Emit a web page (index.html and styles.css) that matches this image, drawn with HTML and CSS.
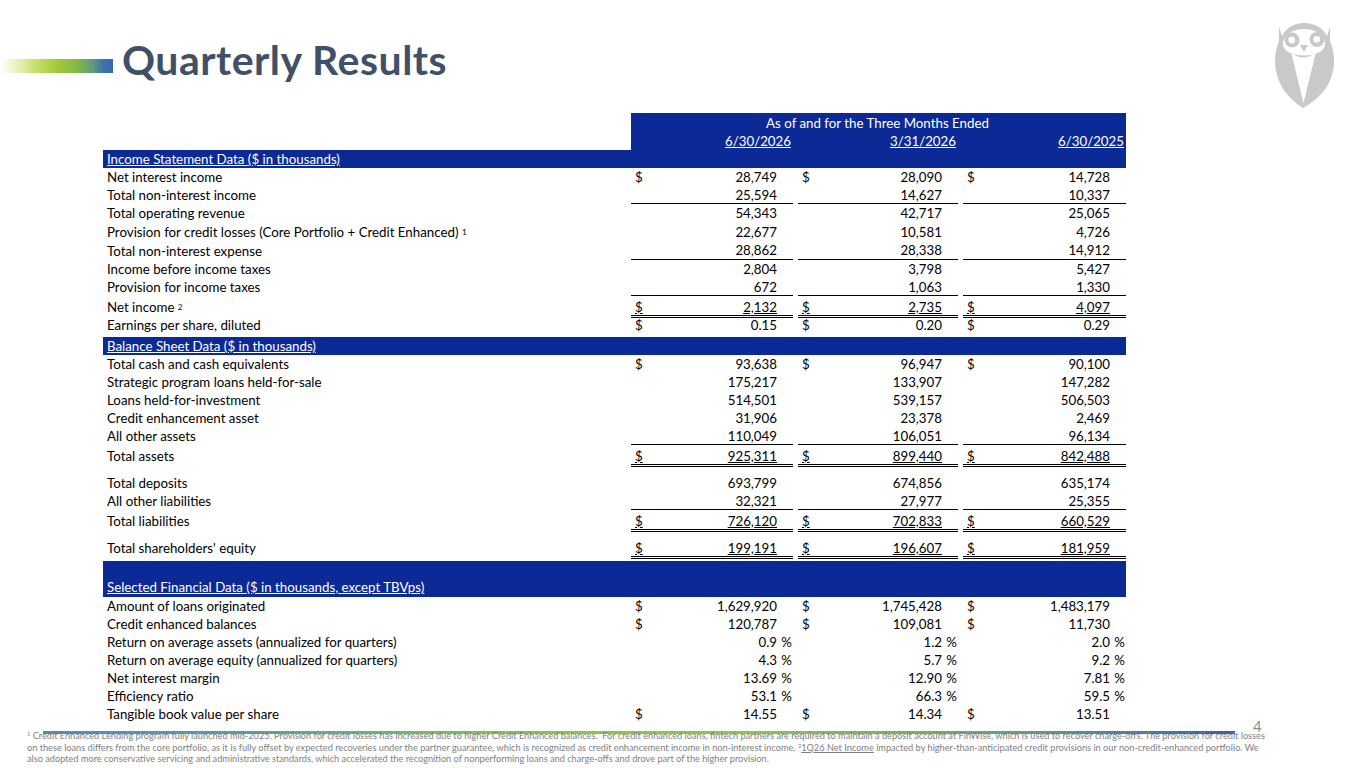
FILE: index.html
```html
<!DOCTYPE html>
<html lang="en">
<head>
<meta charset="utf-8">
<title>Quarterly Results</title>
<link rel="stylesheet" href="styles.css">
</head>
<body>
<div class="slide">
  <header class="top">
    <div class="brand">
      <div class="accent"></div>
      <h1>Quarterly Results</h1>
    </div>
    <svg class="owl" viewBox="0 0 64 90" width="64" height="90" aria-hidden="true">
      <path fill="#c9c9c9" d="M31,2 C42,2 50,7 54,15 L57,6 L57,20 C61,30 62,40 60,50 C57,66 45,79 30,87 C17,79 6,66 3,50 C1,40 2,30 6,20 L6,6 L9,15 C13,7 21,2 31,2 Z"/>
      <path fill="#fff" d="M31,8 C42,8 50,13 52,21 C53,28 47,32 41,33 Q31,36 21,33 C15,32 9,28 10,21 C12,13 20,8 31,8 Z"/>
      <path fill="#fff" d="M18,31 Q30,42 43,31 L30.5,82 Z"/>
      <circle cx="19" cy="19" r="7.5" fill="#c9c9c9"/>
      <circle cx="44" cy="18.5" r="7.5" fill="#c9c9c9"/>
      <circle cx="18.7" cy="19" r="3.4" fill="#fff"/>
      <circle cx="43.7" cy="18.3" r="3.4" fill="#fff"/>
      <path fill="#c9c9c9" d="M27,24 L35,24 L31,31 Z"/>
    </svg>
  </header>

  <section class="fin">
    <div class="row h19">
      <div class="lbl"></div>
      <div class="band span">As of and for the Three Months Ended</div>
    </div>
    <div class="row">
      <div class="lbl"></div>
      <div class="band full"></div>
      <div class="dt c1"><u>6/30/2026</u></div>
      <div class="dt c2"><u>3/31/2026</u></div>
      <div class="dt c3"><u>6/30/2025</u></div>
    </div>
    <div class="row sect"><div class="lbl"><u>Income Statement Data ($ in thousands)</u></div></div>

    <div class="row">
      <div class="lbl">Net interest income</div>
      <div class="g c1"><span class="d">$</span><span class="v">28,749</span><span class="p"></span></div>
      <div class="g c2"><span class="d">$</span><span class="v">28,090</span><span class="p"></span></div>
      <div class="g c3"><span class="d">$</span><span class="v">14,728</span><span class="p"></span></div>
    </div>
    <div class="row">
      <div class="lbl">Total non-interest income</div>
      <div class="g c1 s"><span class="v">25,594</span><span class="p"></span></div>
      <div class="g c2 s"><span class="v">14,627</span><span class="p"></span></div>
      <div class="g c3 s"><span class="v">10,337</span><span class="p"></span></div>
    </div>
    <div class="row">
      <div class="lbl">Total operating revenue</div>
      <div class="g c1"><span class="v">54,343</span><span class="p"></span></div>
      <div class="g c2"><span class="v">42,717</span><span class="p"></span></div>
      <div class="g c3"><span class="v">25,065</span><span class="p"></span></div>
    </div>
    <div class="row h19">
      <div class="lbl">Provision for credit losses (Core Portfolio + Credit Enhanced) <sup>1</sup></div>
      <div class="g c1"><span class="v">22,677</span><span class="p"></span></div>
      <div class="g c2"><span class="v">10,581</span><span class="p"></span></div>
      <div class="g c3"><span class="v">4,726</span><span class="p"></span></div>
    </div>
    <div class="row h19">
      <div class="lbl">Total non-interest expense</div>
      <div class="g c1 s"><span class="v">28,862</span><span class="p"></span></div>
      <div class="g c2 s"><span class="v">28,338</span><span class="p"></span></div>
      <div class="g c3 s"><span class="v">14,912</span><span class="p"></span></div>
    </div>
    <div class="row">
      <div class="lbl">Income before income taxes</div>
      <div class="g c1"><span class="v">2,804</span><span class="p"></span></div>
      <div class="g c2"><span class="v">3,798</span><span class="p"></span></div>
      <div class="g c3"><span class="v">5,427</span><span class="p"></span></div>
    </div>
    <div class="row">
      <div class="lbl">Provision for income taxes</div>
      <div class="g c1 s"><span class="v">672</span><span class="p"></span></div>
      <div class="g c2 s"><span class="v">1,063</span><span class="p"></span></div>
      <div class="g c3 s"><span class="v">1,330</span><span class="p"></span></div>
    </div>
    <div class="row h20">
      <div class="lbl">Net income&nbsp;<sup>2</sup></div>
      <div class="g c1 dbl"><span class="d"><u>$</u></span><span class="v"><u>2,132</u></span><span class="p"></span></div>
      <div class="g c2 dbl"><span class="d"><u>$</u></span><span class="v"><u>2,735</u></span><span class="p"></span></div>
      <div class="g c3 dbl"><span class="d"><u>$</u></span><span class="v"><u>4,097</u></span><span class="p"></span></div>
    </div>
    <div class="row">
      <div class="lbl">Earnings per share, diluted</div>
      <div class="g c1"><span class="d">$</span><span class="v">0.15</span><span class="p"></span></div>
      <div class="g c2"><span class="d">$</span><span class="v">0.20</span><span class="p"></span></div>
      <div class="g c3"><span class="d">$</span><span class="v">0.29</span><span class="p"></span></div>
    </div>

    <div class="row sect gap3"><div class="lbl"><u>Balance Sheet Data ($ in thousands)</u></div></div>

    <div class="row">
      <div class="lbl">Total cash and cash equivalents</div>
      <div class="g c1"><span class="d">$</span><span class="v">93,638</span><span class="p"></span></div>
      <div class="g c2"><span class="d">$</span><span class="v">96,947</span><span class="p"></span></div>
      <div class="g c3"><span class="d">$</span><span class="v">90,100</span><span class="p"></span></div>
    </div>
    <div class="row">
      <div class="lbl">Strategic program loans held-for-sale</div>
      <div class="g c1"><span class="v">175,217</span><span class="p"></span></div>
      <div class="g c2"><span class="v">133,907</span><span class="p"></span></div>
      <div class="g c3"><span class="v">147,282</span><span class="p"></span></div>
    </div>
    <div class="row">
      <div class="lbl">Loans held-for-investment</div>
      <div class="g c1"><span class="v">514,501</span><span class="p"></span></div>
      <div class="g c2"><span class="v">539,157</span><span class="p"></span></div>
      <div class="g c3"><span class="v">506,503</span><span class="p"></span></div>
    </div>
    <div class="row">
      <div class="lbl">Credit enhancement asset</div>
      <div class="g c1"><span class="v">31,906</span><span class="p"></span></div>
      <div class="g c2"><span class="v">23,378</span><span class="p"></span></div>
      <div class="g c3"><span class="v">2,469</span><span class="p"></span></div>
    </div>
    <div class="row">
      <div class="lbl">All other assets</div>
      <div class="g c1 s"><span class="v">110,049</span><span class="p"></span></div>
      <div class="g c2 s"><span class="v">106,051</span><span class="p"></span></div>
      <div class="g c3 s"><span class="v">96,134</span><span class="p"></span></div>
    </div>
    <div class="row h20">
      <div class="lbl">Total assets</div>
      <div class="g c1 dbl"><span class="d"><u>$</u></span><span class="v"><u>925,311</u></span><span class="p"></span></div>
      <div class="g c2 dbl"><span class="d"><u>$</u></span><span class="v"><u>899,440</u></span><span class="p"></span></div>
      <div class="g c3 dbl"><span class="d"><u>$</u></span><span class="v"><u>842,488</u></span><span class="p"></span></div>
    </div>

    <div class="row gap9">
      <div class="lbl">Total deposits</div>
      <div class="g c1"><span class="v">693,799</span><span class="p"></span></div>
      <div class="g c2"><span class="v">674,856</span><span class="p"></span></div>
      <div class="g c3"><span class="v">635,174</span><span class="p"></span></div>
    </div>
    <div class="row">
      <div class="lbl">All other liabilities</div>
      <div class="g c1 s"><span class="v">32,321</span><span class="p"></span></div>
      <div class="g c2 s"><span class="v">27,977</span><span class="p"></span></div>
      <div class="g c3 s"><span class="v">25,355</span><span class="p"></span></div>
    </div>
    <div class="row h20">
      <div class="lbl">Total liabilities</div>
      <div class="g c1 dbl"><span class="d"><u>$</u></span><span class="v"><u>726,120</u></span><span class="p"></span></div>
      <div class="g c2 dbl"><span class="d"><u>$</u></span><span class="v"><u>702,833</u></span><span class="p"></span></div>
      <div class="g c3 dbl"><span class="d"><u>$</u></span><span class="v"><u>660,529</u></span><span class="p"></span></div>
    </div>

    <div class="row h19 gap7">
      <div class="lbl">Total shareholders' equity</div>
      <div class="g c1 dbl"><span class="d"><u>$</u></span><span class="v"><u>199,191</u></span><span class="p"></span></div>
      <div class="g c2 dbl"><span class="d"><u>$</u></span><span class="v"><u>196,607</u></span><span class="p"></span></div>
      <div class="g c3 dbl"><span class="d"><u>$</u></span><span class="v"><u>181,959</u></span><span class="p"></span></div>
    </div>

    <div class="row sect tall gap5"><div class="lbl"><u>Selected Financial Data ($ in thousands, except TBVps)</u></div></div>

    <div class="row">
      <div class="lbl">Amount of loans originated</div>
      <div class="g c1"><span class="d">$</span><span class="v">1,629,920</span><span class="p"></span></div>
      <div class="g c2"><span class="d">$</span><span class="v">1,745,428</span><span class="p"></span></div>
      <div class="g c3"><span class="d">$</span><span class="v">1,483,179</span><span class="p"></span></div>
    </div>
    <div class="row">
      <div class="lbl">Credit enhanced balances</div>
      <div class="g c1"><span class="d">$</span><span class="v">120,787</span><span class="p"></span></div>
      <div class="g c2"><span class="d">$</span><span class="v">109,081</span><span class="p"></span></div>
      <div class="g c3"><span class="d">$</span><span class="v">11,730</span><span class="p"></span></div>
    </div>
    <div class="row">
      <div class="lbl">Return on average assets (annualized for quarters)</div>
      <div class="g c1"><span class="v">0.9</span><span class="p">%</span></div>
      <div class="g c2"><span class="v">1.2</span><span class="p">%</span></div>
      <div class="g c3"><span class="v">2.0</span><span class="p">%</span></div>
    </div>
    <div class="row">
      <div class="lbl">Return on average equity (annualized for quarters)</div>
      <div class="g c1"><span class="v">4.3</span><span class="p">%</span></div>
      <div class="g c2"><span class="v">5.7</span><span class="p">%</span></div>
      <div class="g c3"><span class="v">9.2</span><span class="p">%</span></div>
    </div>
    <div class="row">
      <div class="lbl">Net interest margin</div>
      <div class="g c1"><span class="v">13.69</span><span class="p">%</span></div>
      <div class="g c2"><span class="v">12.90</span><span class="p">%</span></div>
      <div class="g c3"><span class="v">7.81</span><span class="p">%</span></div>
    </div>
    <div class="row">
      <div class="lbl">Efficiency ratio</div>
      <div class="g c1"><span class="v">53.1</span><span class="p">%</span></div>
      <div class="g c2"><span class="v">66.3</span><span class="p">%</span></div>
      <div class="g c3"><span class="v">59.5</span><span class="p">%</span></div>
    </div>
    <div class="row">
      <div class="lbl">Tangible book value per share</div>
      <div class="g c1"><span class="d">$</span><span class="v">14.55</span><span class="p"></span></div>
      <div class="g c2"><span class="d">$</span><span class="v">14.34</span><span class="p"></span></div>
      <div class="g c3"><span class="d">$</span><span class="v">13.51</span><span class="p"></span></div>
    </div>
  </section>

  <div class="foot">
    <div class="rule"></div>
    <div class="pg">4</div>
  </div>
  <p class="notes"><sup>1</sup> Credit Enhanced Lending program fully launched mid-2025. Provision for credit losses has increased due to higher Credit Enhanced balances.&nbsp; For credit enhanced loans, fintech partners are required to maintain a deposit account at FinWise, which is used to recover charge-offs. The provision for credit losses<br>on these loans differs from the core portfolio, as it is fully offset by expected recoveries under the partner guarantee, which is recognized as credit enhancement income in non-interest income. <sup>2</sup><u>1Q26 Net Income</u> impacted by higher-than-anticipated credit provisions in our non-credit-enhanced portfolio. We<br>also adopted more conservative servicing and administrative standards, which accelerated the recognition of nonperforming loans and charge-offs and drove part of the higher provision.</p>
</div>
</body>
</html>
```

FILE: styles.css
```css
html, body {
  margin: 0;
  padding: 0;
  background: #ffffff;
}

.slide {
  width: 1365px;
  height: 768px;
  overflow: hidden;
  font-family: Lato, "Liberation Sans", sans-serif;
  color: #000;
}

/* ---------- header ---------- */
.top {
  display: flex;
  align-items: flex-start;
  height: 113px;
}

.brand {
  display: flex;
  align-items: flex-start;
  margin-top: 39px;
}

.accent {
  width: 113px;
  height: 14px;
  margin-top: 20px;
  background: linear-gradient(to right, #ffffff 0%, #eef4cf 12%, #c9de6a 32%, #a3c93b 50%, #86b843 68%, #5e9a7e 82%, #3f72b0 92%, #3a67b3 100%);
}

.top h1 {
  margin: 0 0 0 9px;
  font-family: Lato, "Liberation Sans", sans-serif;
  font-weight: 700;
  font-size: 41px;
  line-height: 41px;
  letter-spacing: 0.5px;
  color: #415069;
  white-space: nowrap;
}

.owl {
  display: block;
  margin-left: auto;
  margin-top: 21px;
  margin-right: 28px;
}

/* ---------- table ---------- */
.fin {
  margin-left: 103px;
  width: 1023px;
  font-size: 13.3px;
}

.row {
  display: grid;
  grid-template-columns: 528px 162px 5px 160px 5px 163px;
  height: 18px;
}

.row > * {
  grid-row: 1;
  box-sizing: border-box;
  min-width: 0;
}

.h19 { height: 19px; }
.h20 { height: 20px; }
.gap3 { margin-top: 3px; }
.gap5 { margin-top: 5px; }
.gap7 { margin-top: 7px; }
.gap9 { margin-top: 9px; }

.lbl {
  grid-column: 1;
  display: flex;
  align-items: center;
  padding-left: 4px;
  white-space: pre;
}

.lbl sup, .notes sup {
  font-size: 0.62em;
  line-height: 0;
  vertical-align: 0.5em;
}

.band {
  grid-column: 2 / 7;
  background: #0c2a95;
  color: #fff;
}

.band.span {
  display: flex;
  align-items: center;
  justify-content: center;
  padding-right: 2px;
}

.dt {
  color: #fff;
  display: flex;
  align-items: center;
  justify-content: flex-end;
  padding-right: 2px;
}

.c1 { grid-column: 2; }
.c2 { grid-column: 4; }
.c3 { grid-column: 6; }

.sect {
  background: #0c2a95;
  color: #fff;
}

.sect.tall {
  height: 36px;
}

.sect.tall .lbl {
  align-items: flex-end;
  padding-bottom: 2px;
}

.g {
  display: flex;
  align-items: center;
  padding-left: 4px;
  white-space: nowrap;
}

.g .d {
  flex: none;
}

.g .v {
  flex: 1;
  text-align: right;
}

.g .p {
  flex: none;
  width: 16px;
  text-align: right;
  padding-right: 1px;
  box-sizing: border-box;
}

.s {
  border-bottom: 1px solid #000;
}

.dbl {
  border-bottom: 3px double #000;
  padding-top: 3px;
}

/* ---------- footer ---------- */
.foot {
  display: flex;
  align-items: flex-start;
  margin-top: 8px;
  margin-left: 43px;
  height: 3px;
}

.rule {
  width: 1192px;
  height: 3px;
  background: linear-gradient(to right, #4a8cc4 0%, #5aa0a8 18%, #7cbb5a 33%, #8cc63f 45%, #8ec642 58%, #7fae62 72%, #6a9a82 82%, #4f7aa6 92%, #3b5db0 100%);
}

.pg {
  margin-left: 18px;
  margin-top: -6px;
  height: 3px;
  font-size: 15px;
  line-height: 3px;
  color: #8c8c8c;
}

.notes {
  margin: -4px 0 0 27px;
  font-size: 9.2px;
  line-height: 11.5px;
  color: #7f7f7f;
  white-space: nowrap;
}
```
